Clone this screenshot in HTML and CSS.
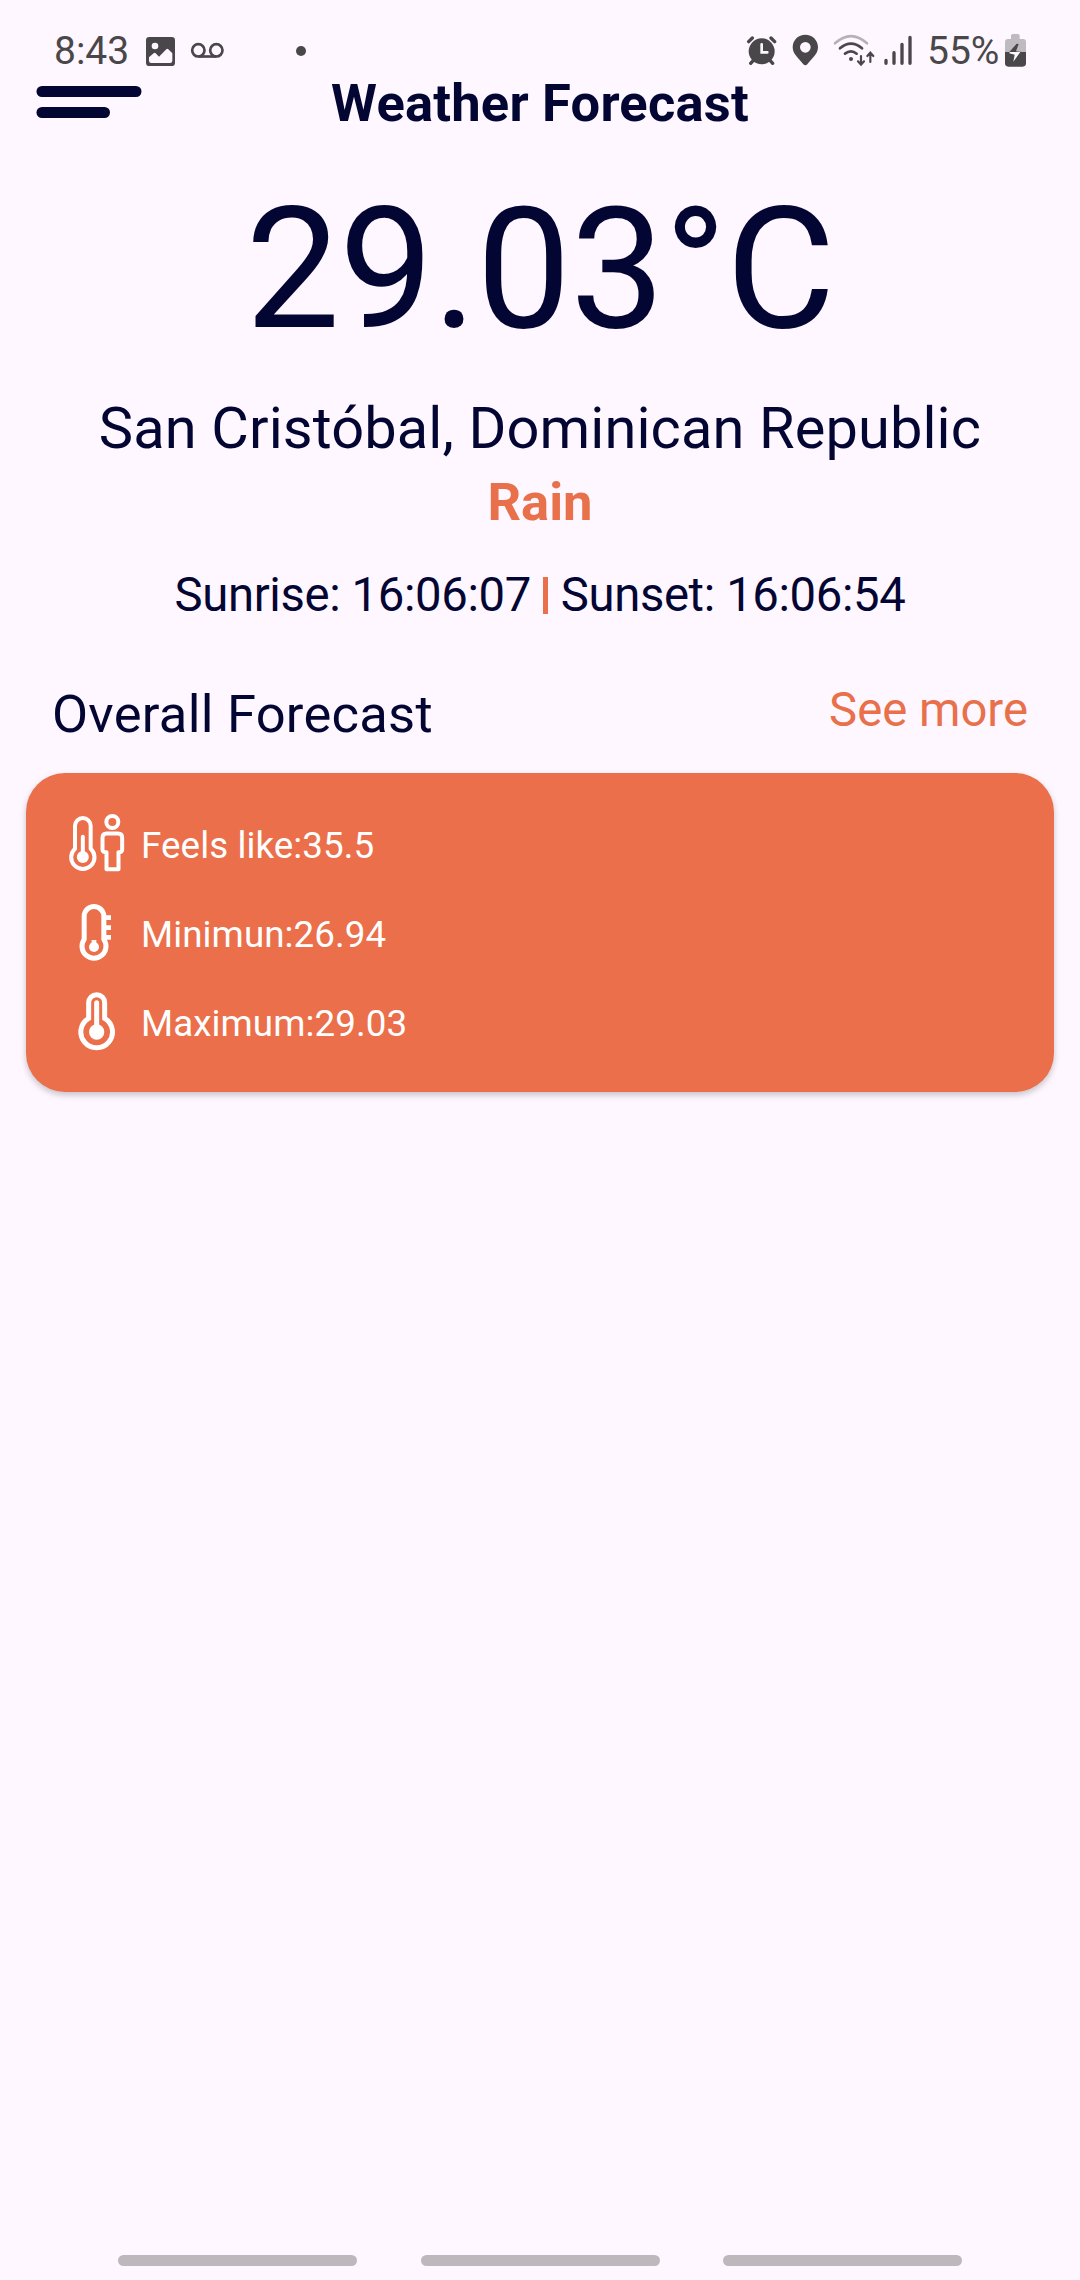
FILE: index.html
```html
<!DOCTYPE html>
<html lang="en">
<head>
<meta charset="utf-8">
<title>Weather Forecast</title>
<link rel="stylesheet" href="styles.css">
</head>
<body>
<div class="screen">
  <div class="status">
    <span class="clock">8:43</span>
    <svg width="44" height="56" viewBox="360 0 132 168"><path fill="currentColor" fill-rule="evenodd" d="M388 51h67a10 10 0 0 1 10 10v67a10 10 0 0 1-10 10h-67a10 10 0 0 1-10-10V61a10 10 0 0 1 10-10zM405 68a10 10 0 1 0 0 20a10 10 0 1 0 0-20zM387 112v10q0 7 7 7h56q7 0 7-7v-22l-12-12q-3-3-6 0l-22 22l-10-10q-3-3-6 0z"/></svg>
    <svg width="100" height="56" viewBox="492 0 300 168"><g fill="none" stroke="currentColor" stroke-width="8"><circle cx="535" cy="91" r="18.500"/><circle cx="589" cy="91" r="18.500"/><path d="M535 109.500h54"/></g></svg>
    <svg width="34" height="56" viewBox="792 0 102 168"><circle cx="843" cy="93" r="15" fill="currentColor"/></svg>
    <div class="status-right">
      <svg width="44" height="56" viewBox="48 0 132 168"><circle cx="95" cy="94" r="39" fill="currentColor"/><path d="M56 65L67 54M134 65L123 54" stroke="currentColor" stroke-width="10" stroke-linecap="round"/><path d="M70 121L62 130M120 121L128 130" stroke="currentColor" stroke-width="10" stroke-linecap="round"/><path class="cutout" d="M95 73V97H112" fill="none" stroke-width="8" stroke-linecap="round"/></svg>
      <svg width="42" height="56" viewBox="180 0 126 168"><path fill="currentColor" fill-rule="evenodd" d="M226 44c-21 0-38 16-38 38c0 22 20 34 32 51q6 6 12 0c12-17 32-29 32-51c0-22-17-38-38-38zm0 22a16 16 0 1 1 0 32a16 16 0 1 1 0-32z"/></svg>
      <svg width="50" height="56" viewBox="306 0 150 168"><g fill="none" stroke="currentColor" stroke-width="8" stroke-linecap="round"><path d="M315 70Q363 27 411 70" opacity=".4"/><path d="M330 85Q363 57 396 85"/><path d="M345 101Q363 87 380 101"/><path stroke-width="6.500" d="M393 108V133M384 124L393 134L402 124M421 126V100M412 108L421 98L430 108"/></g><circle cx="363" cy="117" r="6" fill="currentColor"/></svg>
      <svg width="45" height="56" viewBox="456 0 135 168"><path d="M468 121V130M492 98V130M516 73V130M540 52V130" stroke="currentColor" stroke-width="10" stroke-linecap="round"/></svg>
      <span class="percent">55%</span>
      <svg width="23" height="56" viewBox="822 0 69 168"><path opacity=".35" fill="currentColor" d="M825 96V66q0-9 9-9h9V47q0-5 5-5h16q5 0 5 5v10h10q9 0 9 9v30z"/><path fill="currentColor" d="M825 96h63v34q0 10-10 10h-43q-10 0-10-10z"/><path fill="currentColor" d="M860 71L838 96H875L858 94L866 72z"/><path class="bolt" d="M839 96H871L850 125L854 104L838 100z"/></svg>
    </div>
  </div>

  <header class="header">
    <svg class="menu" width="106" height="34" viewBox="0 0 106 34"><rect x=".5" width="105" height="11" rx="5.500"/><rect x=".5" y="21" width="73.500" height="11" rx="5.500"/></svg>
    <h1 class="title">Weather Forecast</h1>
  </header>

  <main>
    <div class="temperature">29.03°C</div>
    <div class="place">San Cristóbal, Dominican Republic</div>
    <div class="condition">Rain</div>
    <div class="sun"><span>Sunrise: 16:06:07</span><i class="divider"></i><span>Sunset: 16:06:54</span></div>
    <div class="section">
      <h2 class="section-title">Overall Forecast</h2>
      <a class="more">See more</a>
    </div>
    <div class="card">
      <div class="row">
        <svg class="icon" viewBox="0 0 180 267"><g fill="none" stroke="currentColor" stroke-width="12"><path d="M27 74.500a23.500 23.500 0 0 1 47 0V143A35 35 0 1 1 27 143z"/><path d="M50.500 107V168" stroke-linecap="round"/><circle cx="139" cy="63" r="18"/><path stroke-linejoin="round" d="M122 97.500h34q12.500 0 12.500 12.500v36q0 7-11 8v50.500h-36V154q-12-1-12-8v-36q0-12.500 12.500-12.500z"/></g><circle cx="50.500" cy="168" r="18" fill="currentColor"/></svg>
        <span>Feels like:35.5</span>
      </div>
      <div class="row">
        <svg class="icon" viewBox="0 0 180 267"><path fill="none" stroke="currentColor" stroke-width="15" d="M54.500 79a29.500 29.500 0 0 1 59 0V148A36 36 0 1 1 54.500 148z"/><path fill="currentColor" d="M113 76h22v14h-22zM113 106h22v14h-22zM113 135h22v14h-22zM77 150h14v16H77z"/><circle cx="84" cy="171" r="15" fill="currentColor"/></svg>
        <span>Minimun:26.94</span>
      </div>
      <div class="row">
        <svg class="icon" viewBox="0 0 180 267"><g fill="none" stroke="currentColor" stroke-width="15"><path d="M68 71a24 24 0 0 1 48 0V118A47.500 47.500 0 1 1 68 118z"/><path stroke-linecap="round" d="M92 71V155"/></g><circle cx="92" cy="159" r="23" fill="currentColor"/></svg>
        <span>Maximum:29.03</span>
      </div>
    </div>
  </main>

  <div class="navbar"><span></span><span></span><span></span></div>
</div>
</body>
</html>
```
FILE: styles.css
```css
* { box-sizing: border-box; }

body {
  margin: 0;
  background: #fef7ff;
  color: #030633;
  font-family: Roboto, "Liberation Sans", sans-serif;
}

svg { display: block; flex: none; }

.screen {
  display: flex;
  flex-direction: column;
  width: 1080px;
  height: 2280px;
  overflow: hidden;
}

.status {
  display: flex;
  height: 76px;
  padding: 20px 53px 0 54px;
  color: #4a474a;
  font-size: 39px;
  line-height: 62px;
  white-space: nowrap;
}
.status-right { display: flex; margin-left: auto; }
.clock { width: 86px; }
.percent { width: 77px; }
.cutout { stroke: #fef7ff; }
.bolt { fill: #fef7ff; }

.header {
  display: grid;
  grid-template-columns: 106px 1fr 106px;
  height: 54px;
  padding: 0 36px;
}
.menu { margin-top: 10px; fill: #030633; }
.title {
  margin: 0;
  font-size: 52.5px;
  font-weight: 700;
  letter-spacing: 0.2px;
  line-height: 54px;
  text-align: center;
}

main { flex: 1; }

.temperature {
  margin-top: 42px;
  font-size: 168px;
  letter-spacing: -0.7px;
  line-height: 196px;
  text-align: center;
}
.place {
  margin-top: 26px;
  font-size: 57.75px;
  letter-spacing: 0.12px;
  line-height: 68px;
  text-align: center;
}
.condition {
  margin-top: 9px;
  color: #e8704a;
  font-size: 52.5px;
  font-weight: 700;
  line-height: 62px;
  text-align: center;
}
.sun {
  display: flex;
  justify-content: center;
  align-items: center;
  gap: 12.5px;
  margin-top: 34px;
  font-size: 47.25px;
  letter-spacing: -0.37px;
  line-height: 56px;
}
.divider { width: 5px; height: 37px; background: #e8704a; }

.section {
  display: flex;
  justify-content: space-between;
  height: 63px;
  margin-top: 59px;
  padding: 0 52px;
}
.section-title {
  margin: 1px 0 0;
  font-size: 52.5px;
  font-weight: 400;
  letter-spacing: 0.25px;
  line-height: 62px;
}
.more { color: #e8704a; font-size: 47.25px; line-height: 56px; }

.card {
  height: 319px;
  margin: 28px 26px 0;
  padding: 28px 40px 24px;
  border-radius: 39px;
  background: #ea6f4a;
  box-shadow: 0 3px 6px rgba(0, 0, 0, .22);
  color: #fff;
}
.row {
  display: flex;
  align-items: center;
  gap: 15px;
  height: 89px;
  font-size: 36.75px;
  letter-spacing: 0.08px;
}
.icon { width: 60px; height: 89px; }

.navbar {
  display: flex;
  justify-content: space-between;
  padding: 0 118px 14px;
}
.navbar span {
  width: 239px;
  height: 11px;
  border-radius: 5.5px;
  background: #beb8bc;
}
```
